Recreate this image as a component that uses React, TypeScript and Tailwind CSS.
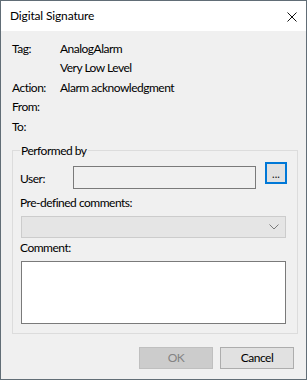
const fontStack = { fontFamily: 'Lato, "Noto Sans", sans-serif' }

const InfoRow = ({ label, value }: { label: string; value: string }) => (
  <div className="flex h-[19.5px] items-center">
    <span className="w-[48px]">{label}</span>
    <span>{value}</span>
  </div>
)

export default function App() {
  return (
    <div
      style={fontStack}
      className="flex h-[380px] w-[307px] flex-col border border-[#616d76] bg-[#f0f0f0] text-[12px] leading-[16px] tracking-[-0.5px] text-black"
    >
      {/* title bar */}
      <div className="flex h-[30px] shrink-0 items-center justify-between bg-white pl-[9px] pr-[9px] tracking-[-0.15px]">
        <span>Digital Signature</span>
        <svg width="10" height="10" viewBox="0 0 10 10" className="mt-[1px]">
          <path d="M0.5 0.5 L9.5 9.5 M9.5 0.5 L0.5 9.5" stroke="#111" strokeWidth="1" fill="none" />
        </svg>
      </div>

      <div className="flex flex-1 flex-col px-[11px] pt-[8px]">
        <InfoRow label="Tag:" value="AnalogAlarm" />
        <InfoRow label="" value="Very Low Level" />
        <InfoRow label="Action:" value="Alarm acknowledgment" />
        <InfoRow label="From:" value="" />
        <InfoRow label="To:" value="" />

        <fieldset className="mt-[6px] w-[285px] border border-[#dcdcdc] pb-[9px] pl-[7px] pr-[10px] pt-[3px]">
          <legend className="px-[1px]">Performed by</legend>

          <div className="flex items-start">
            <span className="mt-[9px] w-[53px]">User:</span>
            <div className="mt-[4px] h-[23px] w-[183px] border border-[#7a7a7a] bg-[#f0f0f0]" />
            <button className="ml-[9px] flex h-[22px] w-[22px] items-end justify-center border-2 border-[#0078d7] bg-[#e1e1e1] pb-[3px] text-[11px] leading-[11px] tracking-normal text-[#111]">
              ...
            </button>
          </div>

          <div className="mt-[6px]">Pre-defined comments:</div>
          <div className="ml-[1px] mt-[5px] flex h-[22px] w-[265px] items-center justify-end border border-[#cccccc] bg-[#e5e5e5] pr-[6px]">
            <svg width="10" height="6" viewBox="0 0 10 6">
              <path d="M0.5 0.5 L5 5 L9.5 0.5" stroke="#7a7a7a" strokeWidth="1" fill="none" />
            </svg>
          </div>

          <div className="mt-[2px]">Comment:</div>
          <div className="ml-[1px] mt-[5px] h-[63px] w-[265px] border border-[#7a7a7a] bg-white" />
        </fieldset>

        <div className="mt-[13px] flex justify-end gap-[7px] pr-[1px]">
          <button className="h-[22px] w-[74px] border border-[#bfbfbf] bg-[#cccccc] text-[#838383]">OK</button>
          <button className="h-[22px] w-[74px] border border-[#adadad] bg-[#e1e1e1] text-black">Cancel</button>
        </div>
      </div>
    </div>
  )
}
